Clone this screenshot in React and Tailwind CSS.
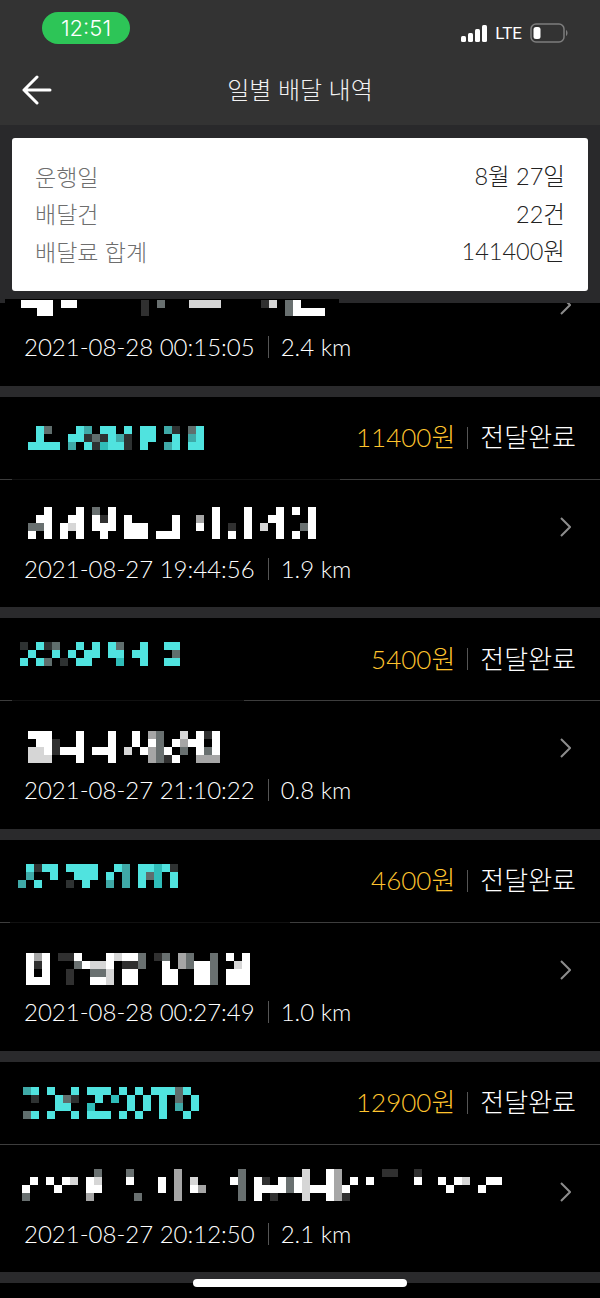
const TEAL = { "#": "#50e3df", d: "#3fa9a7", t: "#2fbdb9", g: "#5f6e6d", k: "#2e3232" };
const WHITE = { "#": "#ffffff", l: "#d6d6d6", s: "#a6a6a6", g: "#697070", k: "#303030" };

// blurred-out names, one char per 8px cell
function Mosaic({ rows, palette, style, className = "" }) {
  const width = Math.max(...rows.map((r) => r.length)) * 8;
  return (
    <svg width={width} height={rows.length * 8} shapeRendering="crispEdges" style={style} className={`block shrink-0 ${className}`}>
      {rows.map((row, y) =>
        row.split("").map((c, x) =>
          palette[c] ? <rect key={`${x}-${y}`} x={x * 8} y={y * 8} width="8" height="8" fill={palette[c]} /> : null
        )
      )}
    </svg>
  );
}

const deliveries = [
  {
    price: "11400원",
    date: "2021-08-28 00:15:05",
    km: "2.4 km",
    hideLine: [0, 0],
    teal: null,
    white: [
      "",
      "",
      "####.##........k.g...llll.....kl.g#",
      "..##...........k.................g####",
    ],
    whiteAt: [21, 26],
    front: true,
  },
  {
    price: "11400원",
    date: "2021-08-27 19:44:56",
    km: "1.9 km",
    hideLine: [12, 328],
    teal: [
      ".#g...#d.##.#.##.dk.g#",
      ".#...##kgk#dk.##..#.d#",
      "####.d.#kt##k.#..d#.##",
    ],
    tealAt: [28, 29],
    white: [
      "..#...#.g.#............#...#...#.#.#",
      ".##..##.#k#.#.....#..s.#...#..##...#",
      "gg#.#l#.###.###...#..#.#.k.#.l.#..g#",
      "#.#.#.#..#..###.###....#.#.#...#.#.#",
    ],
    whiteAt: [28, 27],
  },
  {
    price: "5400원",
    date: "2021-08-27 21:10:22",
    km: "0.8 km",
    hideLine: [12, 232],
    teal: [
      "k.#kg..#.#.#g..#..##",
      ".#..#.#.##.##.##...g",
      "#.#g.k.##...t..#..##",
    ],
    tealAt: [20, 24],
    white: [
      "###...#...#..#.sg..l.#k#",
      ".##k..#...#..#.#g.#s##.#",
      "ll#k###.###.l.#sg#.g.#g#",
      "lll...#...#....sgk#..sss",
    ],
    whiteAt: [28, 30],
  },
  {
    price: "4600원",
    date: "2021-08-28 00:27:49",
    km: "1.0 km",
    hideLine: [10, 280],
    teal: [
      ".#k##.####..#d.##t#k",
      ".d..#..###.#.d.#gt.#",
      "d.#...k.#..d.d.#.t.#",
    ],
    tealAt: [18, 24],
    white: [
      "#s#.kk#...#l##g.kg.sg..g.#.#",
      "#k#...g#ll#.kkg..#.sg##g..l#",
      "#.#..k..ggl.##...##..##g.###",
      "###..k..##l.##...##..##g.###",
    ],
    whiteAt: [26, 30],
  },
  {
    price: "12900원",
    date: "2021-08-27 20:12:50",
    km: "2.1 km",
    hideLine: [0, 0],
    teal: [
      "d#.#..#.###.#.#.###g#.",
      ".k..#gk..#.t.#.#.#.g.#",
      "....##..t....#.#.#.d.#",
      "g#.#..#.###.#.#..#..#.",
    ],
    tealAt: [23, 25],
    white: [
      ".........g...g.....s.......g.......l..#s.....kk..k",
      ".#.#.#l.#l...#...#.s.l....#g.#k.#g#l..#s.#.#.....#..#.#l..##",
      "#...#...##.......#.s.#s....g.####g#l###s#............#...#",
      "g.......s.....g....s.......g.#.k...l..#sk",
    ],
    whiteAt: [22, 24],
  },
];

function Delivery({ d }) {
  return (
    <div>
      <div className="bg-black">
        <div className="flex h-[82px] items-start pr-[24px]">
          {d.teal && <Mosaic rows={d.teal} palette={TEAL} style={{ marginLeft: d.tealAt[0], marginTop: d.tealAt[1] }} />}
          <div className="ml-auto flex h-[82px] items-center text-[26px]">
            <span className="text-[#ffc42e]">{d.price}</span>
            <span className="mx-[12px] h-[22px] w-px bg-[#555555]" />
            <span className="text-white">전달완료</span>
          </div>
        </div>
        <div className="h-px bg-[#3d3d3d]">
          <div className="h-px bg-[#111111]" style={{ marginLeft: d.hideLine[0], width: d.hideLine[1] }} />
        </div>
        <div className="h-[127.67px]">
          <div className="flex h-[67px] justify-between pr-[29px]">
            <Mosaic
              rows={d.white}
              palette={WHITE}
              style={{ marginLeft: d.whiteAt[0], marginTop: d.whiteAt[1] }}
              className={d.front ? "relative z-20" : ""}
            />
            <svg width="11" height="20" viewBox="0 0 11 20" fill="none" stroke="#8c8c8c" strokeWidth="2" className="mt-[37px] shrink-0">
              <path d="M1 1 L10 10 L1 19" />
            </svg>
          </div>
          <div className="flex h-[44px] items-center pl-[24px] text-[24px] text-white">
            <span>{d.date}</span>
            <span className="ml-[13px] mr-[12px] h-[22px] w-px bg-[#555555]" />
            <span>{d.km}</span>
          </div>
        </div>
      </div>
      <div className="h-[11px] bg-[#2a2a2c]" />
    </div>
  );
}

function SummaryRow({ label, value }) {
  return (
    <div className="flex h-[37.5px] items-center justify-between">
      <span className="text-[23px] text-[#6e6e6e]">{label}</span>
      <span className="text-[23.5px] text-[#222222]">{value}</span>
    </div>
  );
}

export default function App() {
  return (
    <div className="relative h-[1298px] overflow-hidden bg-black font-['Lato','Noto_Sans_CJK_KR',sans-serif] font-light">
      <header className="h-[125px] bg-[#333333]">
        <div className="flex h-[60px] items-start justify-between">
          <div className="ml-[42px] mt-[12px] flex h-[32px] w-[88px] items-center justify-center rounded-full bg-[#2dc557] font-['Inter',sans-serif] text-[22px] font-light text-white">
            12:51
          </div>
          <div className="mr-[31px] mt-[23px] flex items-center">
            <svg width="27" height="18" fill="#ffffff" className="mr-[7px]">
              <rect x="0" y="12" width="5" height="6" rx="1.5" />
              <rect x="7" y="9" width="5" height="9" rx="1.5" />
              <rect x="14" y="5" width="5" height="13" rx="1.5" />
              <rect x="21" y="1" width="5" height="17" rx="1.5" />
            </svg>
            <span className="mr-[8px] font-['Roboto',sans-serif] text-[17px] font-normal leading-[18px] text-white">LTE</span>
            <svg width="39" height="20" fill="none">
              <rect x="1" y="1" width="33" height="18" rx="5" stroke="#7e7e7e" strokeWidth="1.5" />
              <rect x="3.5" y="4" width="7" height="12" rx="2.5" fill="#ffffff" />
              <path d="M36 7 C38 8 38 12 36 13 Z" fill="#7e7e7e" />
            </svg>
          </div>
        </div>
        <div className="grid h-[60px] grid-cols-[1fr_auto_1fr] items-center">
          <svg width="30" height="30" viewBox="0 0 30 30" fill="none" stroke="#ffffff" strokeWidth="3" strokeLinecap="round" strokeLinejoin="round" className="ml-[22px]">
            <path d="M2 15 H28 M15 2 L2 15 L15 28" />
          </svg>
          <h1 className="text-[24px] font-light text-[#f2f2f2]">일별 배달 내역</h1>
        </div>
      </header>

      <div className="absolute left-0 right-0 top-[125px] z-10 h-[178px] bg-[#29292b] px-[12px] pt-[13px]">
        <div className="h-[153px] rounded-[3px] bg-white pl-[23px] pr-[23px] pt-[20px]">
          <SummaryRow label="운행일" value="8월 27일" />
          <SummaryRow label="배달건" value="22건" />
          <SummaryRow label="배달료 합계" value="141400원" />
        </div>
        <div className="absolute left-[5px] top-[174px] h-[4px] w-[334px] bg-black" />
      </div>

      <div className="pt-[50px]">
        {deliveries.map((d) => (
          <Delivery key={d.date} d={d} />
        ))}
      </div>

      <div className="absolute bottom-[11px] left-[193px] h-[8px] w-[214px] rounded-full bg-white" />
    </div>
  );
}
